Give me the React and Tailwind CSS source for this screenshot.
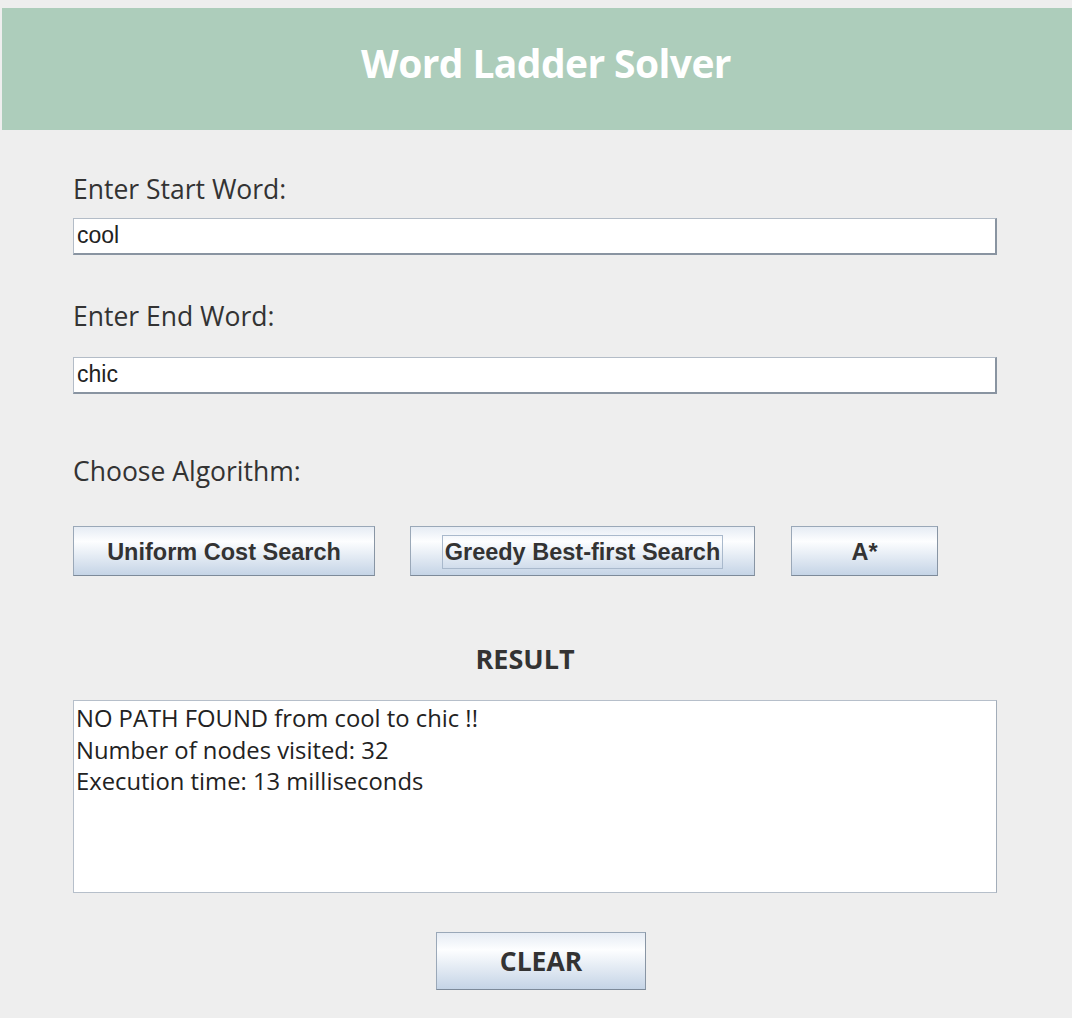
export default function App() {
  const seg = { fontFamily: '"Open Sans", "Noto Sans", sans-serif' };
  const arial = { fontFamily: '"Liberation Sans", Arial, sans-serif' };

  const btn =
    "h-[50px] border border-[#9aa8b8] border-b-[#7d8a99] border-r-[#8895a4] bg-gradient-to-b from-[#e6ecf4] via-[#fdfeff] via-30% to-[#c5d4e6] text-[#333] font-bold flex items-center justify-center";

  return (
    <div className="w-[1072px] h-[1018px] bg-[#eeeeee] pt-[8px] pl-[2px] overflow-hidden" style={seg}>
      <div className="h-[122px] bg-[#adcdbb] flex items-center justify-center">
        <h1 className="text-white font-bold text-[39px] tracking-[-0.6px] -mt-[12px] ml-[18px]">Word Ladder Solver</h1>
      </div>

      <div className="pl-[71px] pr-[75px]">
        <div className="mt-[43px] text-[26.5px] leading-[32px] text-[#333]">Enter Start Word:</div>
        <Field value="cool" className="mt-[13px]" font={arial} />

        <div className="mt-[45px] text-[26.5px] leading-[32px] text-[#333]">Enter End Word:</div>
        <Field value="chic" className="mt-[25px]" font={arial} />

        <div className="mt-[61px] text-[26.5px] leading-[32px] text-[#333]">Choose Algorithm:</div>

        <div className="mt-[39px] flex" style={arial}>
          <button className={btn + " text-[23.5px] w-[302px] pt-[3px]"}>Uniform Cost Search</button>
          <button className={btn + " text-[23.5px] w-[345px] ml-[35px] pt-[2px]"}>
            <span className="border border-[#a9b9cc] px-[2px] leading-[32px]">Greedy Best-first Search</span>
          </button>
          <button className={btn + " text-[23.5px] w-[147px] ml-[36px] pt-[3px]"}>A*</button>
        </div>

        <div className="mt-[67px] text-center text-[27px] leading-[32px] font-bold text-[#333] -ml-[20px]">RESULT</div>

        <div className="mt-[25px] h-[193px] bg-white border border-[#b6bfca] border-r-[#a3adb9] text-[23.8px] leading-[31.5px] text-[#222] pl-[2px] pt-[2px]">
          <div>NO PATH FOUND from cool to chic !!</div>
          <div>Number of nodes visited: 32</div>
          <div>Execution time: 13 milliseconds</div>
        </div>

        <div className="mt-[39px] flex justify-center ml-[12px]">
          <button className={btn + " text-[26.5px] w-[210px] h-[58px] pt-[2px]"}>CLEAR</button>
        </div>
      </div>
    </div>
  );
}

function Field({ value, className, font }) {
  return (
    <div
      className={
        "h-[37px] bg-white border border-[#b3bcc7] border-b-[2px] border-r-[2px] border-b-[#8994a1] border-r-[#8994a1] flex items-end pb-[1px] pl-[3px] text-[23px] text-[#222] " +
        className
      }
      style={font}
    >
      {value}
    </div>
  );
}
